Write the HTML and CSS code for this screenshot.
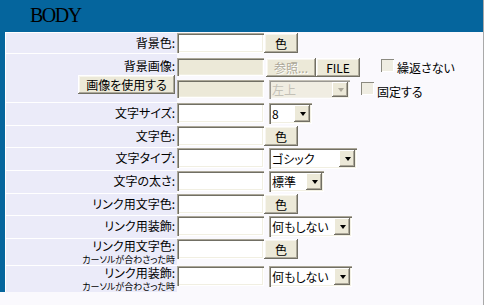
FILE: index.html
```html
<!DOCTYPE html>
<html lang="ja">
<head>
  <meta charset="UTF-8">
  <title>BODY</title>
  <link rel="stylesheet" href="styles.css">
</head>
<body>

<div class="panel">
  <div class="title">BODY</div>
  <table class="form">
    <!-- 背景 -->
    <tr class="row-first">
      <th>背景色:</th>
      <td><div class="line"><input type="text" class="txt"><button class="btn btn-color">色</button></div></td>
    </tr>
    <tr class="row-img">
      <th class="label-img">背景画像:<br><button class="btn btn-use">画像を使用する</button></th>
      <td class="cell-img">
        <div class="line">
          <input type="text" class="txt txt-small" disabled>
          <button class="btn btn-ref" disabled>参照...</button>
          <button class="btn btn-file">FILE</button>
          <label class="chk chk-repeat"><input type="checkbox"><span>繰返さない</span></label>
        </div>
        <div class="line line-2">
          <input type="text" class="txt txt-small" disabled>
          <span class="sel sel-pos disabled"><select disabled><option>左上</option></select></span>
          <label class="chk chk-fixed"><input type="checkbox"><span>固定する</span></label>
        </div>
      </td>
    </tr>
    <!-- 文字 -->
    <tr class="row-sel">
      <th>文字サイズ:</th>
      <td><div class="line"><input type="text" class="txt"><span class="sel sel-size"><select><option>8</option></select></span></div></td>
    </tr>
    <tr class="row-btn">
      <th>文字色:</th>
      <td><div class="line"><input type="text" class="txt"><button class="btn btn-color">色</button></div></td>
    </tr>
    <tr class="row-sel">
      <th>文字タイプ:</th>
      <td><div class="line"><input type="text" class="txt"><span class="sel sel-type"><select><option>ゴシック</option></select></span></div></td>
    </tr>
    <tr class="row-sel">
      <th>文字の太さ:</th>
      <td><div class="line"><input type="text" class="txt"><span class="sel sel-weight"><select><option>標準</option></select></span></div></td>
    </tr>
    <!-- リンク -->
    <tr class="row-btn">
      <th>リンク用文字色:</th>
      <td><div class="line"><input type="text" class="txt"><button class="btn btn-color">色</button></div></td>
    </tr>
    <tr class="row-sel">
      <th>リンク用装飾:</th>
      <td><div class="line"><input type="text" class="txt"><span class="sel sel-deco"><select><option>何もしない</option></select></span></div></td>
    </tr>
    <tr class="row-note">
      <th class="label-note">リンク用文字色:<span class="note">カーソルが合わさった時</span></th>
      <td><div class="line"><input type="text" class="txt"><button class="btn btn-color">色</button></div></td>
    </tr>
    <tr class="row-note">
      <th class="label-note">リンク用装飾:<span class="note">カーソルが合わさった時</span></th>
      <td><div class="line"><input type="text" class="txt"><span class="sel sel-deco"><select><option>何もしない</option></select></span></div></td>
    </tr>
  </table>
</div>

</body>
</html>
```

FILE: styles.css
```css
body {
  margin: 0;
  min-height: 100vh;
  box-sizing: border-box;
  background: #faf9fd;
  border-right: 1px solid #a9a9a9;
  font-family: "Noto Sans CJK JP", sans-serif;
  font-size: 12px;
  font-feature-settings: "palt";
  color: #000;
}
.panel {
  background: #05659d;
  padding-left: 5px;
}
.title {
  height: 32px;
  box-sizing: border-box;
  padding: 5px 0 0 25px;
  font-family: "Liberation Serif", serif;
  font-size: 20px;
  line-height: 20px;
  letter-spacing: -1.5px;
}
.form {
  width: 100%;
  border-spacing: 0;
  border-left: 1px solid #fff;
  background: #faf9fd;
}
.form th {
  width: 169px;
  padding: 4px 2px 0 0;
  text-align: right;
  font-weight: normal;
  line-height: 12px;
  white-space: nowrap;
  vertical-align: top;
  background: #ebebf9;
  border-top: 1px solid #fff;
}
.form td {
  padding: 0;
  vertical-align: top;
  border-top: 1px solid #faf9fd;
}
.row-first { height: 21px; }
.row-btn { height: 22px; }
.row-sel { height: 23px; }
.row-img { height: 49px; }
.row-note { height: 27px; }

.form th.label-img { padding-top: 6px; }
.form th.label-note { padding-top: 1px; }
.note {
  display: block;
  margin-top: 3px;
  font-size: 9px;
  line-height: 9px;
}
.cell-img { padding-top: 4px !important; }

.line {
  display: flex;
  align-items: flex-start;
}
.line-2 { margin-top: 3px; }
.line > * + * { margin-left: 5px; }

/* 入力欄 */
.txt {
  width: 87px;
  height: 20px;
  box-sizing: border-box;
  margin: 0;
  padding: 0 3px;
  border: 0;
  background: #fff;
  font: inherit;
  box-shadow: inset 1px 1px #aca899, inset 2px 2px #716f64, inset -1px -1px #fff, inset -2px -2px #f1efe2;
}
.txt-small { height: 18px; }
.txt:disabled { background: #ece9d8; }

/* ボタン */
.btn {
  height: 20px;
  margin: 0;
  padding: 0;
  border: 0;
  background: #ece9d8;
  font: inherit;
  color: #000;
  cursor: pointer;
  box-shadow: inset -1px -1px #716f64, inset 1px 1px #fff, inset -2px -2px #aca899, inset 2px 2px #f7f5ee;
}
.btn-color { width: 34px; }
.btn-use { width: 97px; height: 19px; margin-top: 3px; }
.btn-ref { width: 50px; height: 19px; color: #aca899; text-shadow: 1px 1px #fff; }
.line > .btn-ref { margin-left: 2px; }
.btn-file { width: 44px; height: 19px; }

/* セレクト */
.sel {
  position: relative;
  display: inline-block;
  height: 21px;
}
.sel select {
  width: 100%;
  height: 100%;
  margin: 0;
  padding: 0 0 0 3px;
  border: 0;
  border-radius: 0;
  appearance: none;
  background: #fff;
  font: inherit;
  color: #000;
  box-shadow: inset 1px 1px #aca899, inset 2px 2px #716f64, inset -1px -1px #fff, inset -2px -2px #f1efe2;
}
.sel::after {
  content: "";
  position: absolute;
  top: 2px;
  right: 2px;
  bottom: 2px;
  width: 16px;
  background: #ece9d8;
  box-shadow: inset -1px -1px #716f64, inset 1px 1px #fff, inset -2px -2px #aca899;
}
.sel::before {
  content: "";
  position: absolute;
  z-index: 1;
  top: 50%;
  right: 6px;
  margin-top: -2px;
  border-style: solid;
  border-width: 4px 3.5px 0;
  border-color: #000 transparent transparent;
}
.sel.disabled select { background: #ece9d8; color: #aca899; }
.sel.disabled::before { border-top-color: #aca899; }
.sel-size { width: 43px; }
.sel-type { width: 88px; }
.sel-weight { width: 55px; }
.sel-deco { width: 83px; }
.sel-pos { width: 81px; height: 19px; }

/* チェックボックス */
.chk {
  display: flex;
  align-items: flex-start;
  white-space: nowrap;
}
.chk input {
  appearance: none;
  width: 13px;
  height: 13px;
  margin: 1px 3px 0 0;
  background: #efede2;
  box-shadow: inset 1px 1px #8b8a80, inset -1px -1px #fff;
}
.chk span {
  padding-top: 4px;
  line-height: 12px;
}
.line > .chk-repeat { margin-left: 21px; }
.line > .chk-fixed { margin-left: 11px; }
.chk-fixed input { margin-top: 2px; }
.chk-fixed span { padding-top: 6px; }
```
